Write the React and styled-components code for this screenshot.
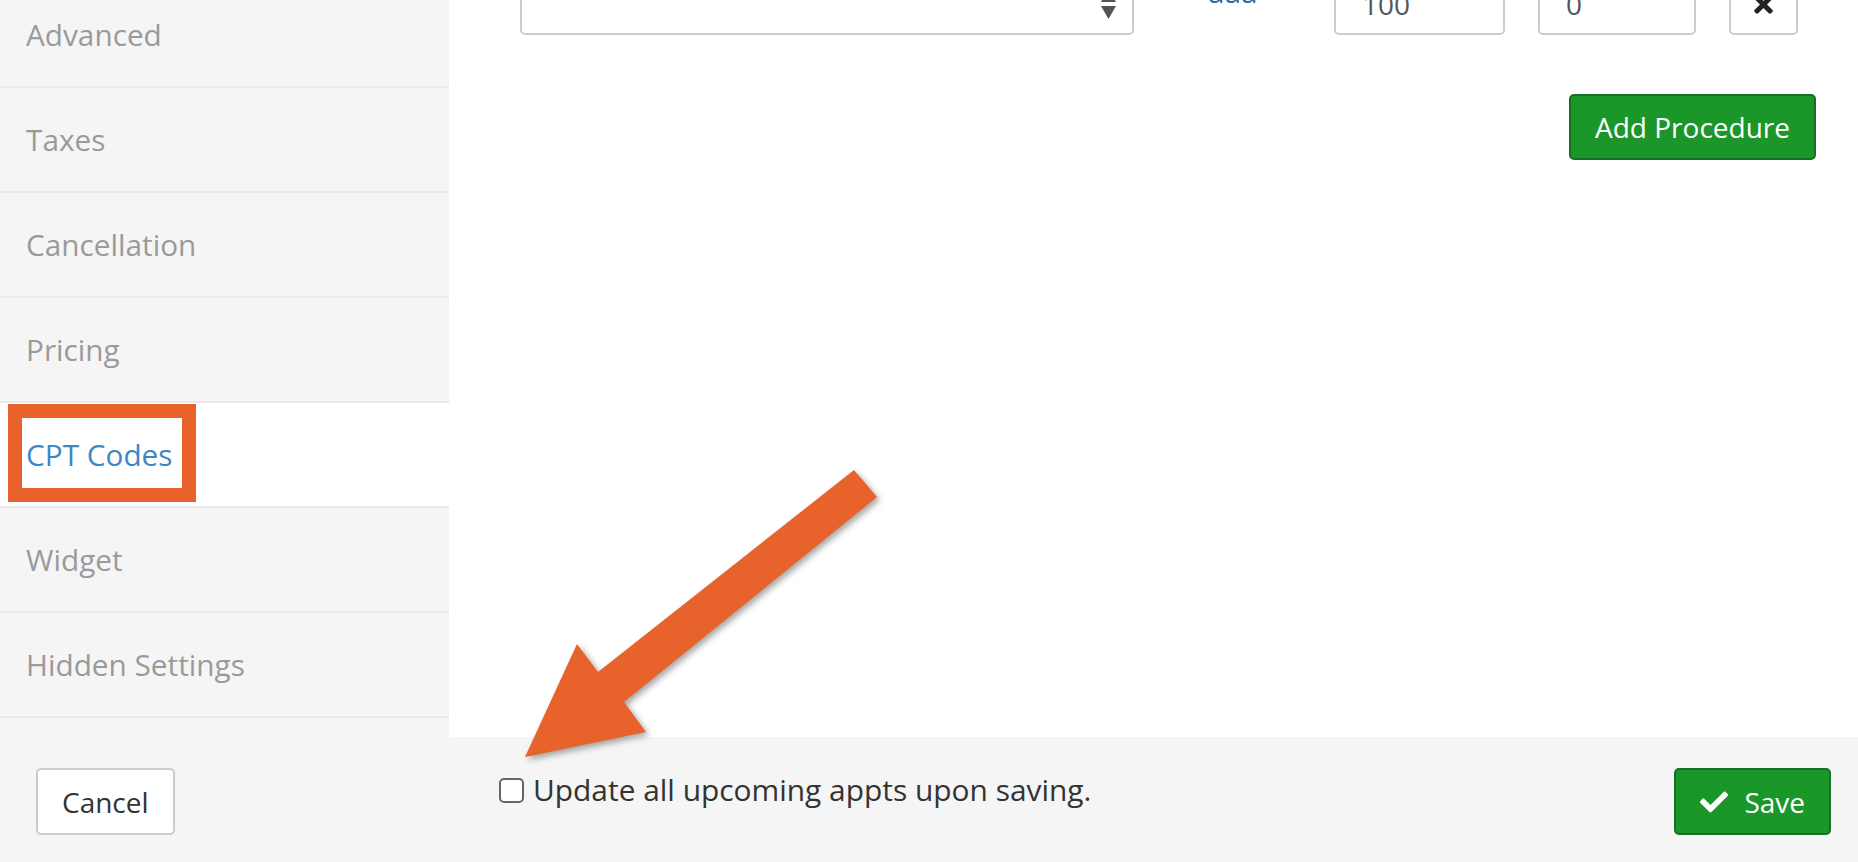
import React from 'react';
import styled, { createGlobalStyle } from 'styled-components';
import { FaCheck, FaTimes } from 'react-icons/fa';

const GlobalStyle = createGlobalStyle`
  html, body { margin: 0; padding: 0; background: #fff; }
  body { font-family: "Open Sans", "Liberation Sans", sans-serif; }
  *, *::before, *::after { box-sizing: border-box; }
`;

const Page = styled.div`
  position: relative;
  width: 1858px;
  height: 862px;
  overflow: hidden;
  display: flex;
  flex-direction: column;
`;

const Main = styled.div`
  display: flex;
  height: 737px;
  flex: none;
  overflow: hidden;
`;

const Sidebar = styled.nav`
  width: 449px;
  flex: none;
  background: #f5f5f5;
  overflow: hidden;
`;

const NavList = styled.ul`
  list-style: none;
  margin: -17px 0 0;
  padding: 0;
`;

const NavItem = styled.li`
  position: relative;
  height: 105px;
  display: flex;
  align-items: center;
  padding-left: 26px;
  border-bottom: 2px solid #e9e9e9;
  background: ${p => (p.$active ? '#ffffff' : 'transparent')};
  color: ${p => (p.$active ? '#3c87c6' : '#9a9a9a')};
  font-size: 29.75px;
  line-height: 40px;
`;

const Highlight = styled.span`
  position: absolute;
  left: 8px;
  top: 1px;
  width: 188px;
  height: 98px;
  border: 14px solid #e8632c;
  pointer-events: none;
`;

const Content = styled.section`
  flex: 1;
  background: #fff;
  overflow: hidden;
  display: flex;
  flex-direction: column;
  padding: 0 42px 0 71px;
`;

const ProcedureRow = styled.div`
  display: grid;
  grid-template-columns: 614px 134px 171px 158px 69px;
  grid-template-rows: 62px;
  column-gap: 33px;
  align-items: end;
  height: 62px;
  margin-top: -27px;
  flex: none;
`;

const SelectBox = styled.div`
  height: 62px;
  border: 2px solid #cccccc;
  border-radius: 5px;
  background: #fff;
  display: flex;
  align-items: center;
  justify-content: flex-end;
  padding-right: 16px;
`;

const LinkText = styled.a`
  align-self: start;
  margin-top: -1px;
  padding-left: 41px;
  font-size: 29.75px;
  line-height: 40px;
  color: #2b6ca9;
  text-decoration: none;
`;

const TextInput = styled.input`
  height: 62px;
  width: 100%;
  border: 2px solid #cccccc;
  border-radius: 5px;
  padding: 0 26px;
  font-family: inherit;
  font-size: 28px;
  color: #555;
  background: #fff;
  outline: none;
`;

const IconButton = styled.button`
  height: 62px;
  width: 100%;
  border: 2px solid #cccccc;
  border-radius: 5px;
  background: #fff;
  color: #222;
  display: flex;
  align-items: center;
  justify-content: center;
  padding: 0;
`;

const ActionBar = styled.div`
  display: flex;
  justify-content: flex-end;
  margin-top: 59px;
`;

const Button = styled.button`
  height: ${p => p.$h || 66}px;
  display: inline-flex;
  align-items: center;
  gap: 16px;
  padding: 0 24px;
  border-radius: 5px;
  font-family: inherit;
  font-size: 28px;
  line-height: 40px;
  border: 2px solid ${p => (p.$primary ? '#176f26' : '#cccccc')};
  background: ${p => (p.$primary ? '#1b9729' : '#ffffff')};
  color: ${p => (p.$primary ? '#ffffff' : '#333333')};
  cursor: pointer;
`;

const Footer = styled.footer`
  display: flex;
  height: 125px;
  flex: none;
  background: #f5f5f5;
`;

const FooterLeft = styled.div`
  width: 449px;
  flex: none;
  padding: 31px 0 0 36px;
`;

const FooterRight = styled.div`
  flex: 1;
  display: flex;
  justify-content: space-between;
  align-items: flex-start;
  padding: 31px 27px 0 50px;
`;

const CheckLabel = styled.label`
  display: flex;
  align-items: center;
  gap: 9px;
  margin-top: 2px;
  font-size: 29.9px;
  line-height: 40px;
  color: #333;
`;

const CheckBox = styled.input`
  appearance: none;
  margin: 0;
  width: 25px;
  height: 25px;
  border: 2px solid #666;
  border-radius: 5px;
  background: #fff;
`;

const Annotation = styled.svg`
  position: absolute;
  left: 0;
  top: 0;
  pointer-events: none;
  filter: drop-shadow(3px 3px 3px rgba(0, 0, 0, 0.35));
`;

const navItems = ['Advanced', 'Taxes', 'Cancellation', 'Pricing', 'CPT Codes', 'Widget', 'Hidden Settings'];

export default function App() {
  return (
    <Page>
      <GlobalStyle />
      <Main>
        <Sidebar>
          <NavList>
            {navItems.map(item => (
              <NavItem key={item} $active={item === 'CPT Codes'}>
                {item}
                {item === 'CPT Codes' && <Highlight />}
              </NavItem>
            ))}
          </NavList>
        </Sidebar>
        <Content>
          <ProcedureRow>
            <SelectBox>
              <svg width="15" height="31" viewBox="0 0 15 31">
                <polygon points="7.5,0 15,13 0,13" fill="#555" />
                <polygon points="0,17 15,17 7.5,30" fill="#555" />
              </svg>
            </SelectBox>
            <LinkText href="#">aaa</LinkText>
            <TextInput defaultValue="100" />
            <TextInput defaultValue="0" />
            <IconButton aria-label="Remove">
              <FaTimes size={27} />
            </IconButton>
          </ProcedureRow>
          <ActionBar>
            <Button $primary>Add Procedure</Button>
          </ActionBar>
        </Content>
      </Main>
      <Footer>
        <FooterLeft>
          <Button $h={67}>Cancel</Button>
        </FooterLeft>
        <FooterRight>
          <CheckLabel>
            <CheckBox type="checkbox" />
            Update all upcoming appts upon saving.
          </CheckLabel>
          <Button $primary $h={67}>
            <FaCheck size={28} />
            Save
          </Button>
        </FooterRight>
      </Footer>
      <Annotation width="1858" height="862" viewBox="0 0 1858 862">
        <polygon
          points="854,470 877,497 624,702 646,732 525,757 577,644 598,672"
          fill="#e8632c"
        />
      </Annotation>
    </Page>
  );
}
